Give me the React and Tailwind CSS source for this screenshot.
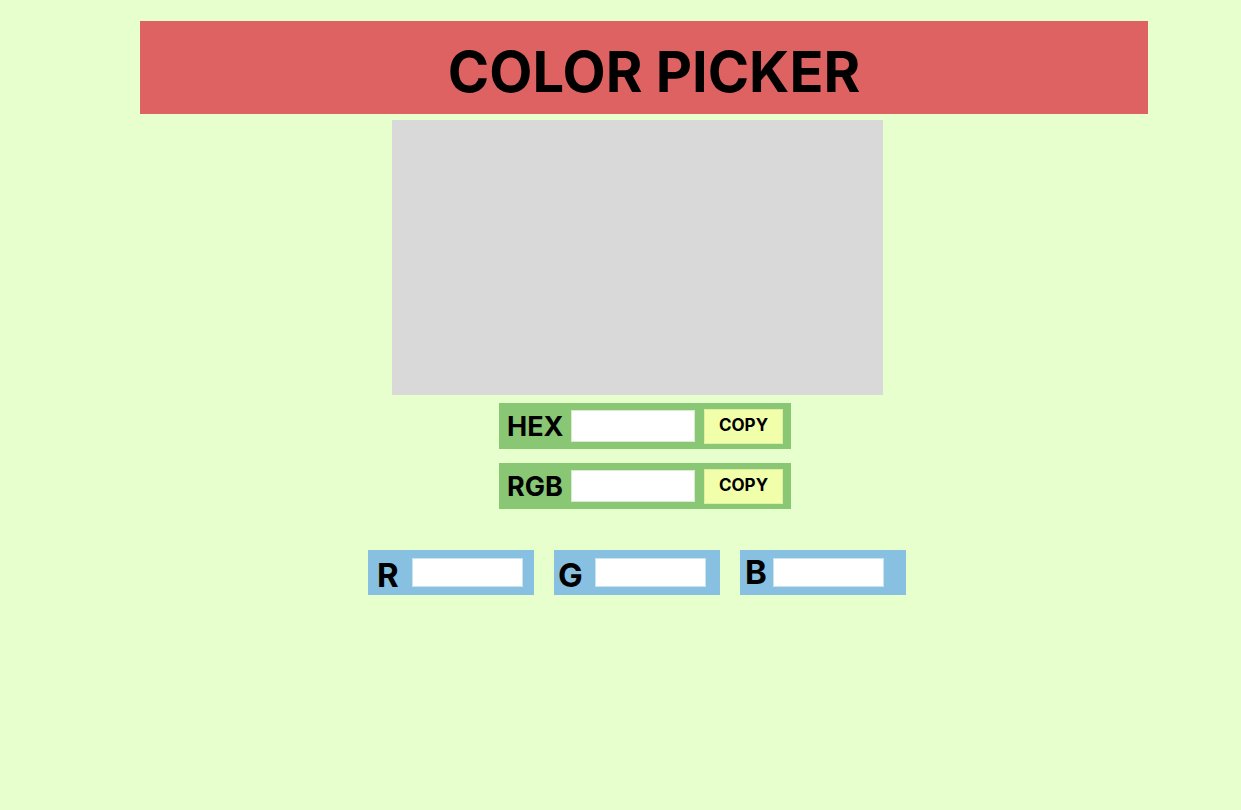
const rows = [
  { label: "HEX", value: "" },
  { label: "RGB", value: "" },
];

const channels = [
  { label: "R", pad: "pl-[9px]", gap: "ml-[13px]", drop: "mt-[5px]" },
  { label: "G", pad: "pl-[4px]", gap: "ml-[12px]", drop: "mt-[5px]" },
  { label: "B", pad: "pl-[5px]", gap: "ml-[6px]", drop: "mt-0" },
];

const CodeRow = ({ label }) => (
  <div className="flex items-center w-[292px] h-[46px] bg-[#89c774] pl-[8px]">
    <span className="text-[27px] font-bold leading-none w-[56px] mt-[1px]">{label}</span>
    <input
      type="text"
      className="ml-[8px] w-[124px] h-[32px] bg-white border border-[#d6eecb] outline-none"
    />
    <button className="ml-[9px] w-[79px] h-[35px] bg-[#f1ffaa] border border-[#dff0a0] text-[17px] font-bold leading-none pb-[2px]">
      COPY
    </button>
  </div>
);

export default function App() {
  return (
    <div
      className="min-h-[810px] w-full bg-[#e6ffcc] text-black pt-[21px]"
      style={{ fontFamily: "Inter, 'Liberation Sans', sans-serif" }}
    >
      <header className="ml-[140px] w-[1008px] h-[93px] bg-[#de6262] pt-[17px] pl-[20px] text-center">
        <h1 className="text-[56px] font-bold leading-[68px]">COLOR PICKER</h1>
      </header>

      <div className="ml-[392px] mt-[6px] w-[491px] h-[275px] bg-[#d9d9d9]" />

      <div className="ml-[499px] mt-[8px] flex flex-col gap-[14px]">
        {rows.map((r) => (
          <CodeRow key={r.label} label={r.label} />
        ))}
      </div>

      <div className="ml-[368px] mt-[41px] flex gap-[20px]">
        {channels.map((c) => (
          <div
            key={c.label}
            className={`flex items-center w-[166px] h-[45px] bg-[#88c0e1] ${c.pad}`}
          >
            <span className={`text-[33px] font-bold leading-none ${c.drop}`}>{c.label}</span>
            <input
              type="text"
              className={`${c.gap} w-[111px] h-[29px] bg-white border border-[#c9e3f1] outline-none`}
            />
          </div>
        ))}
      </div>
    </div>
  );
}
